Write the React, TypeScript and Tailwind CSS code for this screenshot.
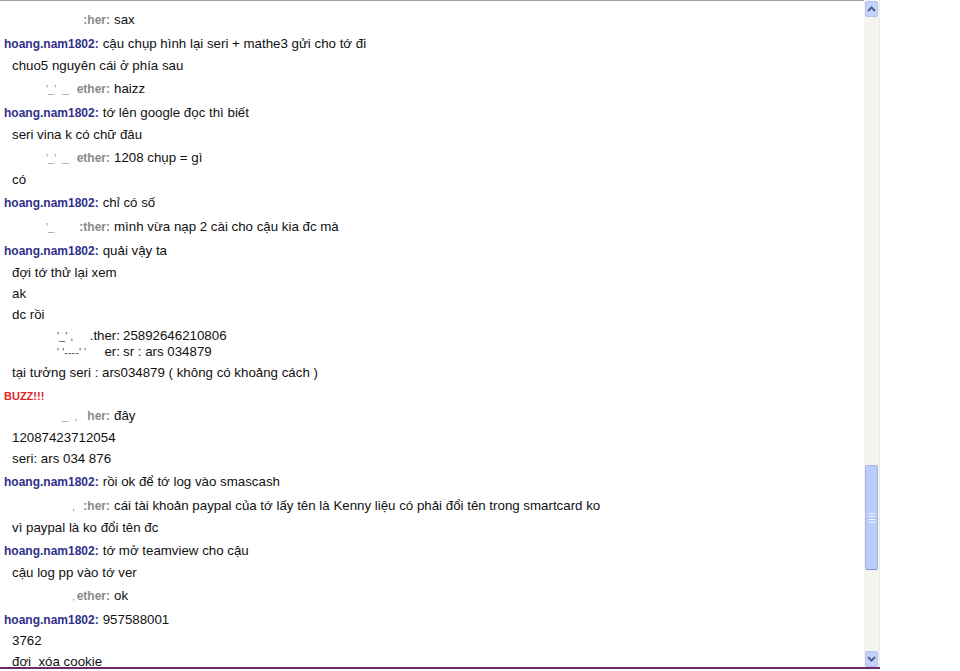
import React from "react";

type Row =
  | { kind: "me"; text: string; h: number }
  | { kind: "cont"; text: string; h: number }
  | { kind: "other"; text: string; name: string; frag?: string; fragX?: number; h: number }
  | { kind: "plain"; text: string; name: string; frag?: string; fragX?: number; h: number }
  | { kind: "buzz"; h: number };

const rows: Row[] = [
  { kind: "other", name: ":her:", text: "sax", h: 24 },
  { kind: "me", text: "cậu chụp hình lại seri + mathe3 gửi cho tớ đi", h: 22 },
  { kind: "cont", text: "chuo5 nguyên cái ở phía sau", h: 23 },
  { kind: "other", name: "ether:", frag: "'_'  _", fragX: 46, text: "haizz", h: 24 },
  { kind: "me", text: "tớ lên google đọc thì biết", h: 22 },
  { kind: "cont", text: "seri vina k có chữ đâu", h: 23 },
  { kind: "other", name: "ether:", frag: "'_'  _", fragX: 46, text: "1208 chụp = gì", h: 22 },
  { kind: "cont", text: "có", h: 23 },
  { kind: "me", text: "chỉ có số", h: 24 },
  { kind: "other", name: ":ther:", frag: "'_", fragX: 46, text: "mình vừa nạp 2 cài cho cậu kia đc mà", h: 24 },
  { kind: "me", text: "quải vậy ta", h: 22 },
  { kind: "cont", text: "đợi tớ thử lại xem", h: 21 },
  { kind: "cont", text: "ak", h: 21 },
  { kind: "cont", text: "dc rồi", h: 21 },
  { kind: "plain", name: ".ther:", frag: "'_' ,", fragX: 57, text: "25892646210806", h: 16 },
  { kind: "plain", name: "er:", frag: "' '----' '", fragX: 57, text: "sr : ars 034879", h: 21 },
  { kind: "cont", text: "tại tưởng seri : ars034879 ( không có khoảng cách )", h: 23 },
  { kind: "buzz", h: 20 },
  { kind: "other", name: "her:", frag: "_  ,", fragX: 62, text: "đây", h: 22 },
  { kind: "cont", text: "12087423712054", h: 21 },
  { kind: "cont", text: "seri: ars 034 876", h: 23 },
  { kind: "me", text: "rồi ok để tớ log vào smascash", h: 24 },
  { kind: "other", name: ":her:", frag: ",", fragX: 72, text: "cái tài khoản paypal của tớ lấy tên là Kenny liệu có phải đổi tên trong smartcard ko", h: 22 },
  { kind: "cont", text: "vì paypal là ko đổi tên đc", h: 23 },
  { kind: "me", text: "tớ mở teamview cho cậu", h: 22 },
  { kind: "cont", text: "cậu log pp vào tớ ver", h: 23 },
  { kind: "other", name: "ether:", frag: ",", fragX: 72, text: "ok", h: 24 },
  { kind: "me", text: "957588001", h: 21 },
  { kind: "cont", text: "3762", h: 21 },
  { kind: "cont", text: "đợi  xóa cookie", h: 21 },
];

function Chevron({ up }: { up?: boolean }) {
  return (
    <svg width="9" height="6" viewBox="0 0 9 6">
      <path
        d={up ? "M1 5 L4.5 1.5 L8 5" : "M1 1 L4.5 4.5 L8 1"}
        fill="none"
        stroke="#4d6185"
        strokeWidth="2"
      />
    </svg>
  );
}

function ChatRow({ row }: { row: Row }) {
  const style = { height: row.h };
  if (row.kind === "me") {
    return (
      <div className="flex pl-[4px] leading-[16px] whitespace-pre" style={style}>
        <span className="text-[12px] font-bold text-[#30308a]">hoang.nam1802:</span>
        <span className="ml-[4px] text-[13.3px] text-[#111]">{row.text}</span>
      </div>
    );
  }
  if (row.kind === "cont") {
    return (
      <div className="pl-[12px] leading-[16px] whitespace-pre text-[13.3px] text-[#111]" style={style}>
        {row.text}
      </div>
    );
  }
  if (row.kind === "buzz") {
    return (
      <div className="pl-[4px] leading-[16px] text-[11px] font-bold text-[#e0262a]" style={style}>
        BUZZ!!!
      </div>
    );
  }
  if (row.kind === "other") {
    return (
      <div className="flex leading-[16px] whitespace-pre" style={style}>
        <div className="flex w-[110px] shrink-0">
          {row.frag && (
            <span className="text-[11px] text-[#9a9a9a]" style={{ marginLeft: row.fragX }}>
              {row.frag}
            </span>
          )}
          <span className="ml-auto text-[12px] font-bold text-[#8a8a8a]">{row.name}</span>
        </div>
        <span className="ml-[4px] text-[13.3px] text-[#111]">{row.text}</span>
      </div>
    );
  }
  return (
    <div className="flex leading-[16px] whitespace-pre" style={style}>
      <div className="flex w-[120px] shrink-0">
        {row.frag && (
          <span className="text-[11px] text-[#555]" style={{ marginLeft: row.fragX }}>
            {row.frag}
          </span>
        )}
        <span className="ml-auto text-[13.3px] text-[#111]">{row.name}</span>
      </div>
      <span className="ml-[3px] text-[13.3px] text-[#111]">{row.text}</span>
    </div>
  );
}

export default function App() {
  return (
    <div
      className="flex w-[960px] h-[671px] bg-white overflow-hidden"
      style={{ fontFamily: '"Liberation Sans", Arial, sans-serif' }}
    >
      <div className="flex flex-col w-[880px]">
        <div className="flex h-[667px]">
          {/* message area */}
          <div className="w-[864px] border-t border-[#a0a0a0] overflow-hidden pt-[11px]">
            {rows.map((r, i) => (
              <ChatRow key={i} row={r} />
            ))}
          </div>

          {/* scrollbar */}
          <div className="w-[16px] flex flex-col bg-[#f6f4ef] border-r border-[#ecebe6] pt-[1px]">
            <div className="mx-[1px] h-[16px] flex items-center justify-center rounded-[2px] bg-[#c4d3fb] border border-[#b3c3ec]">
              <Chevron up />
            </div>
            <div className="h-[448px]" />
            <div className="mx-[1px] h-[105px] flex flex-col items-center justify-center gap-[2px] rounded-[2px] bg-[#bacdfa] border border-[#a5b8e6] border-b-[#7f93c4]">
              <div className="w-[6px] h-[1px] bg-[#eef3ff]" />
              <div className="w-[6px] h-[1px] bg-[#eef3ff]" />
              <div className="w-[6px] h-[1px] bg-[#eef3ff]" />
              <div className="w-[6px] h-[1px] bg-[#eef3ff]" />
            </div>
            <div className="flex-1" />
            <div className="mx-[1px] h-[16px] flex items-center justify-center rounded-[2px] bg-[#c4d3fb] border border-[#b3c3ec]">
              <Chevron />
            </div>
          </div>
        </div>
        <div className="h-[2px] bg-[#6a2b6e]" />
      </div>
      <div className="flex-1 bg-white" />
    </div>
  );
}
